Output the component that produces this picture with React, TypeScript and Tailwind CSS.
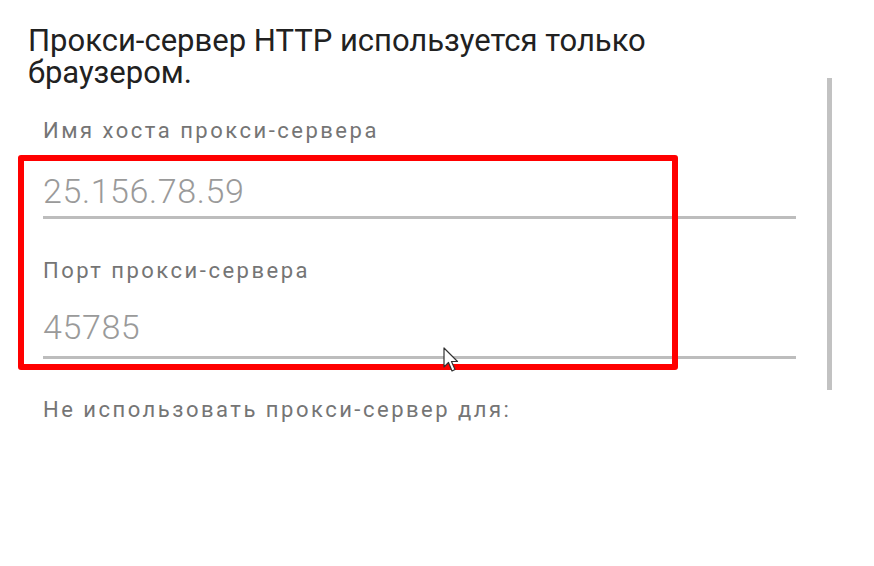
export default function App() {
  return (
    <div
      className="relative h-[566px] w-[874px] overflow-hidden bg-white"
      style={{ fontFamily: "Roboto, 'Noto Sans', sans-serif" }}
    >
      <div className="flex">
        <div className="flex w-[796px] flex-col">
          <div className="pl-[28px] pt-[25px] text-[31px] leading-[32px] text-[#212121]">
            Прокси-сервер HTTP используется только
            <br />
            браузером.
          </div>

          <div className="pl-[43px]">
            <div className="pt-[28px] text-[22px] leading-[28px] tracking-[2.5px] text-[#757575]">
              Имя хоста прокси-сервера
            </div>
            <div className="pt-[26px] text-[34px] font-light leading-[40px] tracking-[0.6px] text-[#9a9a9a]">
              25.156.78.59
            </div>
            <div className="mt-[5px] h-[3px] bg-[#bdbdbd]" />

            <div className="pt-[38px] text-[22px] leading-[28px] tracking-[2.5px] text-[#757575]">
              Порт прокси-сервера
            </div>
            <div className="pt-[22px] text-[34px] font-light leading-[40px] tracking-[0.6px] text-[#9a9a9a]">
              45785
            </div>
            <div className="mt-[9px] h-[3px] bg-[#bdbdbd]" />

            <div className="pt-[37px] text-[22px] leading-[28px] tracking-[2.5px] text-[#757575]">
              Не использовать прокси-сервер для:
            </div>
          </div>
        </div>
        <div className="ml-[31px] mt-[78px] h-[312px] w-[5px] bg-[#c2c2c2]" />
      </div>

      {/* annotation frame */}
      <div className="absolute left-[18px] top-[155px] h-[215px] w-[660px] rounded-[3px] border-[6px] border-[#ff0000]" />

      {/* mouse pointer */}
      <svg className="absolute left-[443px] top-[347px]" width="18" height="28" viewBox="0 0 18 28">
        <path
          d="M1 1 L1 20 L5.5 15.5 L9 24 L12 22.5 L8.5 14.5 L14.5 14.5 Z"
          fill="white"
          stroke="#333"
          strokeWidth="1.2"
          strokeLinejoin="round"
        />
      </svg>
    </div>
  );
}
